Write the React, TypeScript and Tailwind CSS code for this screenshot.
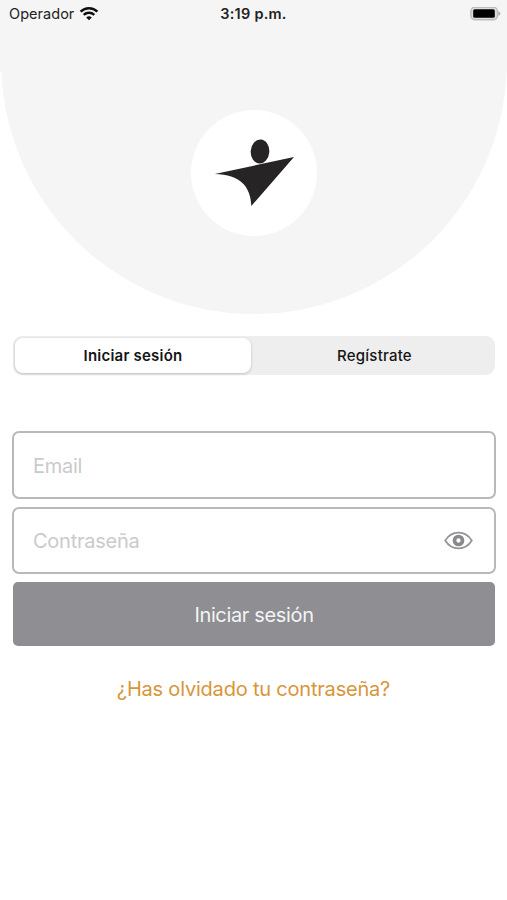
import type { InputHTMLAttributes, ReactNode } from 'react';
import { useState } from 'react';

const TABS = ['Iniciar sesión', 'Regístrate'];

function WifiIcon() {
  return (
    <svg className="h-[14px] w-[20px]" fill="none" viewBox="0 0 20 14">
      <path d="M1.6 4.7a12 12 0 0 1 16.8 0" stroke="#111" strokeWidth="2.5" />
      <path d="M4.7 7.9a7.6 7.6 0 0 1 10.6 0" stroke="#111" strokeWidth="2.4" />
      <path d="M10 13.2 7.2 10.5a4 4 0 0 1 5.6 0Z" fill="#111" />
    </svg>
  );
}

function BatteryIcon() {
  return (
    <svg className="h-[15px] w-[31px]" viewBox="0 0 31 15">
      <rect
        fill="#dcdcdc"
        height="12.6"
        rx="4"
        stroke="#bdbdbd"
        strokeWidth="1.4"
        width="26.6"
        x="0.9"
        y="0.2"
      />
      <rect fill="#000" height="8.6" rx="1.6" width="21.6" x="3.2" y="2.2" />
      <path d="M28.4 4.2c2.6 1 2.6 3.6 0 4.6Z" fill="#aaa" />
    </svg>
  );
}

function StatusBar() {
  return (
    <div className="grid h-7 grid-cols-3 items-center text-[#222]">
      <div className="flex items-center gap-[5px] pl-[9px]">
        <span className="text-[14.5px] tracking-[0.04px]">Operador</span>
        <WifiIcon />
      </div>
      <div className="text-center text-[14.5px] font-semibold tracking-[0.25px]">
        3:19 p.m.
      </div>
      <div className="flex justify-end pr-[6px]">
        <BatteryIcon />
      </div>
    </div>
  );
}

function Logo() {
  return (
    <div className="h-[126px] w-[126px] rounded-full bg-white">
      <svg className="h-full w-full" viewBox="0 0 126 126">
        <ellipse
          cx="69"
          cy="41.5"
          fill="#272425"
          rx="9.3"
          ry="12"
          transform="rotate(4 69 41.5)"
        />
        <path
          d="M23.8 64 103 47 60.300 96C59.800 76.800 49.300 64.300 23.800 64Z"
          fill="#272425"
        />
      </svg>
    </div>
  );
}

function EyeIcon() {
  return (
    <svg className="h-[20px] w-[29px]" fill="none" viewBox="0 0 29 20">
      <path
        d="M1.2 9.5C4.500 4.200 9.200 1.600 14.500 1.600S24.500 4.200 27.800 9.500c-3.300 5.300-8 7.900-13.300 7.900S4.500 14.800 1.200 9.500Z"
        stroke="#939395"
        strokeWidth="1.7"
      />
      <circle cx="14.5" cy="9.5" r="4" stroke="#8a8a8e" strokeWidth="3.7" />
    </svg>
  );
}

interface FieldProps extends InputHTMLAttributes<HTMLInputElement> {
  children?: ReactNode;
}

function Field({ children, ...props }: FieldProps) {
  return (
    <div className="flex h-full items-center rounded-[7px] border-2 border-[#b9b9bb] pr-[21px] pl-[19px]">
      <input
        className="min-w-0 flex-1 bg-transparent pt-px text-[20px] tracking-[-0.25px] outline-none placeholder:text-[#cacacc]"
        {...props}
      />
      {children}
    </div>
  );
}

export default function App() {
  const [active, setActive] = useState(0);
  const [visible, setVisible] = useState(false);

  return (
    <div className="h-[900px] w-[507px] overflow-hidden bg-white font-['Inter','Liberation_Sans',sans-serif]">
      {/* Full-width band on top, the round part starts below it */}
      <header>
        <div className="h-[72px] bg-[#f5f5f5]">
          <StatusBar />
        </div>
        <div className="ml-px h-[242px] overflow-hidden">
          <div className="-mt-[264.5px] flex h-[506px] w-[506px] justify-center rounded-full bg-[#f5f5f5] pt-[302px]">
            <Logo />
          </div>
        </div>
      </header>

      <main className="px-3">
        <div className="mt-[22px] ml-px grid h-[39px] grid-cols-[236px_1fr] gap-[5px] rounded-[9px] bg-[#eeeeee] p-[2px]">
          {TABS.map((tab, index) => (
            <button
              className={
                index === active
                  ? 'rounded-[8px] bg-white pt-px text-[15px] font-semibold tracking-[0.22px] text-[#151515] shadow-[0_1px_3px_rgba(0,0,0,0.2)]'
                  : 'rounded-[8px] pt-px text-[15px] font-medium tracking-[0.22px] text-[#151515]'
              }
              key={tab}
              onClick={() => setActive(index)}
              type="button"
            >
              {tab}
            </button>
          ))}
        </div>

        <form className="mt-[56px]" onSubmit={(e) => e.preventDefault()}>
          <div className="h-[68px] w-[484px]">
            <Field placeholder="Email" type="text" />
          </div>
          <div className="mt-2 h-[67px] w-[484px]">
            <Field
              placeholder="Contraseña"
              type={visible ? 'text' : 'password'}
            >
              <button onClick={() => setVisible(!visible)} type="button">
                <EyeIcon />
              </button>
            </Field>
          </div>
          <button
            className="mt-2 ml-px h-[64px] w-[482px] rounded-[5px] bg-[#8e8e93] pt-0.5 text-[20px] tracking-[-0.35px] text-[#f4f4f5]"
            type="submit"
          >
            Iniciar sesión
          </button>
        </form>

        <div className="mt-[28px] text-center">
          <button
            className="text-[20px] tracking-[-0.2px] text-[#d8963a]"
            type="button"
          >
            ¿Has olvidado tu contraseña?
          </button>
        </div>
      </main>
    </div>
  );
}
